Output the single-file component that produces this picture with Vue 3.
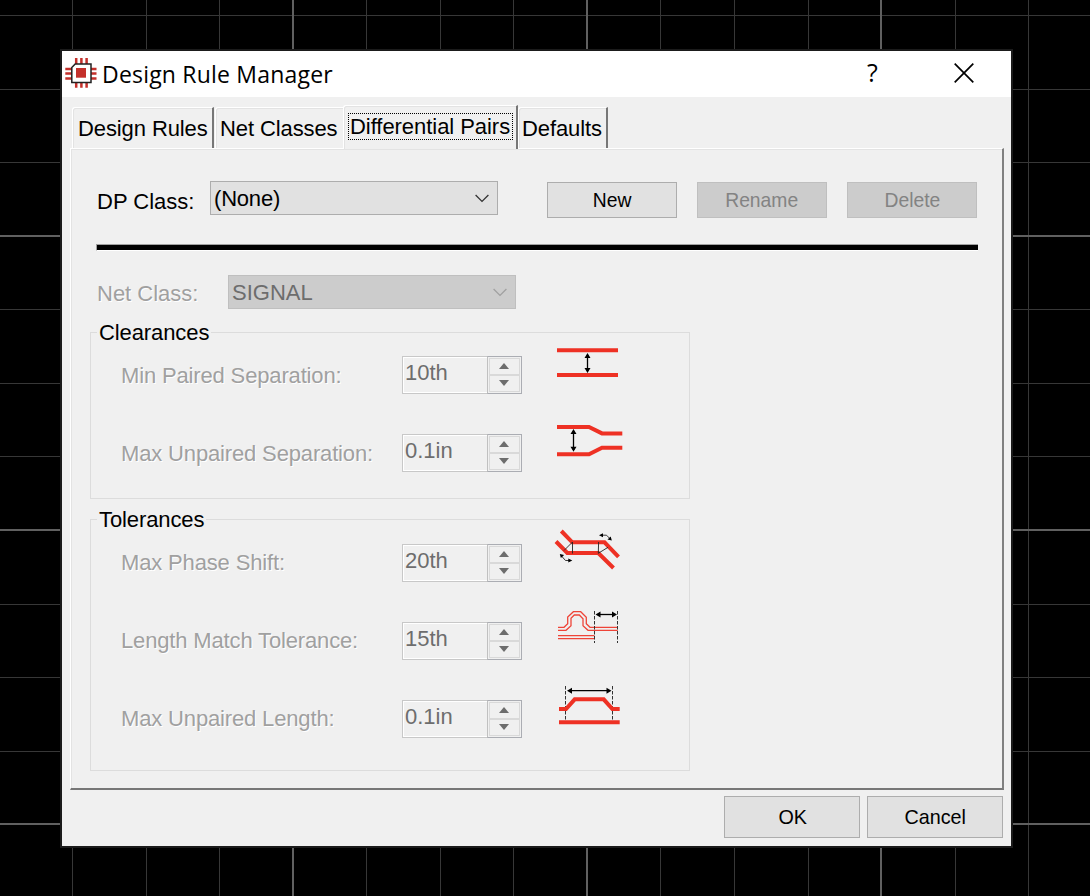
<script setup>
const thin = { x: [72, 146, 219, 366, 440, 513, 660, 734, 808, 955, 1028], y: [15, 89, 162, 309, 383, 456, 604, 677, 751] }
const bold = { x: [292, 586, 880], y: [235, 529, 823] }
const clearances = [
  { label: 'Min Paired Separation:', value: '10th', icon: 'paired' },
  { label: 'Max Unpaired Separation:', value: '0.1in', icon: 'unpaired' },
]
const tolerances = [
  { label: 'Max Phase Shift:', value: '20th', icon: 'phase' },
  { label: 'Length Match Tolerance:', value: '15th', icon: 'match' },
  { label: 'Max Unpaired Length:', value: '0.1in', icon: 'length' },
]
const groups = [
  { title: 'Clearances', rows: clearances, cls: 'clear' },
  { title: 'Tolerances', rows: tolerances, cls: 'toler' },
]
</script>

<template>
  <div class="desktop">
    <svg class="canvas" width="1090" height="896" shape-rendering="crispEdges">
      <rect v-for="x in thin.x" :key="'a' + x" :x="x" y="0" width="1" height="896" fill="#373737" />
      <rect v-for="y in thin.y" :key="'b' + y" x="0" :y="y" width="1090" height="1" fill="#373737" />
      <rect v-for="x in bold.x" :key="'c' + x" :x="x" y="0" width="2" height="896" fill="#606060" />
      <rect v-for="y in bold.y" :key="'d' + y" x="0" :y="y" width="1090" height="2" fill="#606060" />
    </svg>
    <main class="dialog">
      <header class="titlebar">
        <svg class="chip" width="32" height="32" viewBox="65 57 32 32">
          <g stroke="#c4302b" stroke-width="2.500">
            <path d="M76.200 58v29.700M81.400 58v29.700M86.600 58v29.700M65.300 69h31.200M65.300 73.600h31.200M65.300 78.500h31.200" />
          </g>
          <path d="M75.200 64H91v18.600H71.800V67.500z" fill="#fff" stroke="#222" stroke-width="1.500" />
          <rect x="76" y="68" width="10" height="9.700" fill="#c4302b" />
        </svg>
        <h1>Design Rule Manager</h1>
        <span class="help">?</span>
        <svg class="close" width="20" height="20" viewBox="0 0 20 20"><path d="M.7.700l18.600 18.600M19.300.700L.7 19.300" stroke="#000" stroke-width="1.700" /></svg>
      </header>
      <nav class="tabs">
        <div class="tab t1"><span>Design Rules</span></div>
        <div class="tab t2"><span>Net Classes</span></div>
        <div class="tab t3 active"><span>Differential Pairs</span></div>
        <div class="tab t4"><span>Defaults</span></div>
      </nav>
      <section class="panel">
        <div class="row-class">
          <label class="dp">DP Class:</label>
          <div class="combo"><span>(None)</span>
            <svg width="14" height="9" viewBox="0 0 14 9"><path d="M.6 1l6.400 6.400L13.400 1" fill="none" stroke="#333" stroke-width="1.300" /></svg>
          </div>
          <div class="btns">
            <button class="btn"><span>New</span></button>
            <button class="btn off"><span>Rename</span></button>
            <button class="btn off"><span>Delete</span></button>
          </div>
        </div>
        <div class="rule"></div>
        <div class="row-net">
          <label>Net Class:</label>
          <div class="combo off"><span>SIGNAL</span>
            <svg width="14" height="9" viewBox="0 0 14 9"><path d="M.6 1l6.400 6.400L13.400 1" fill="none" stroke="#a0a0a0" stroke-width="1.300" /></svg>
          </div>
        </div>
        <div v-for="g in groups" :key="g.title" class="group" :class="g.cls">
          <h2>{{ g.title }}</h2>
          <div v-for="r in g.rows" :key="r.label" class="field">
            <label>{{ r.label }}</label>
            <div class="spin">
              <span class="val">{{ r.value }}</span>
              <div class="arrows">
                <i><svg width="10" height="6"><path d="M0 6L5 0l5 6z" fill="#6d6d6d" /></svg></i>
                <i><svg width="10" height="6"><path d="M0 0h10L5 6z" fill="#6d6d6d" /></svg></i>
              </div>
            </div>
            <svg v-if="r.icon === 'paired'" class="pic" width="80" height="50" viewBox="550 340 80 50">
              <path class="red" d="M557 350.300h61M557 375h61" />
              <path class="ink" d="M587.500 355v16" />
              <path d="M587.500 353l3 5h-6zM587.500 373l3-5h-6z" />
            </svg>
            <svg v-else-if="r.icon === 'unpaired'" class="pic" width="80" height="50" viewBox="550 418 80 50">
              <path class="red" d="M557 427h32l13 6.400h20.300M557 454.300h32l13-6.500h20.300" />
              <path class="ink" d="M573.500 431v19" />
              <path d="M573.500 429l3 5h-6zM573.500 451.700l3-5h-6z" />
            </svg>
            <svg v-else-if="r.icon === 'phase'" class="pic" width="80" height="50" viewBox="550 528 80 50">
              <path class="red" d="M561.300 531l11 11.300H604.500L618.500 556.800M556 541.500L567.300 553h31L613.500 568" />
              <path class="hair" d="M572.500 542v11.500M572.500 542l-8.500 8.500M598.600 542l-.3 11.300 9.700-6M601 535.200h5.500l4 4M561.500 556l4 4.500h5.500" />
              <path d="M599 535.200l4-2v4zM611.800 540.500l-4.300-1 3.200-3zM559.800 554l4.300 1-3.200 3zM572.300 560.500l-4-2v4z" />
            </svg>
            <svg v-else-if="r.icon === 'match'" class="pic" width="80" height="50" viewBox="550 606 80 50">
              <path class="fine" d="M558 627.300h6l3.700-3.600V617l5.700-5.300h7.300l5.600 5.600v6.400l3.700 3.600h27.700M558 630.300h8l5-4.600v-7.400l3.300-3.300h5l3.700 3.700v7l5 4.600h29.700M558 635.700h36.500M558 638.700h36.500" />
              <path class="dash" d="M594.500 611v32M617.500 611v32" />
              <path class="ink" d="M598 614.500h16" />
              <path d="M595.500 614.500l5-3v6zM617 614.500l-5-3v6z" />
            </svg>
            <svg v-else class="pic" width="80" height="50" viewBox="550 684 80 50">
              <path class="dash" d="M565.500 686v36M612.500 686v36" />
              <path class="red" d="M559 709h7l8.700-9.700h29l8.700 9.700h7.300M559 722.300h60.700" />
              <path class="ink" d="M570 690.700h38" />
              <path d="M567 690.700l5-3v6zM611.500 690.700l-5-3v6z" />
            </svg>
          </div>
        </div>
      </section>
      <footer>
        <button class="btn"><span>OK</span></button>
        <button class="btn"><span>Cancel</span></button>
      </footer>
    </main>
  </div>
</template>

<style scoped>
* { box-sizing: border-box; }
.desktop { width: 1090px; height: 896px; background: #000; overflow: hidden; position: relative; padding: 49px 0 0 60px; font: 22px/26px "Liberation Sans", Arial, sans-serif; color: #000; white-space: nowrap; }
.canvas { position: absolute; inset: 0; }
.dialog { position: relative; width: 953px; height: 799px; border: 2px solid #1b1b1b; background: #f0f0f0; display: flex; flex-direction: column; }
.titlebar { height: 46px; flex: none; background: #fff; display: flex; padding-left: 3px; }
.chip { margin-top: 6px; }
h1 { margin: 7px 0 0 5px; width: 662px; font: 23px/32px "Open Sans", "Noto Sans", sans-serif; letter-spacing: .2px; }
.help { width: 20px; margin: 5px 0 0 103px; font: 500 25px/32px "Open Sans", "Noto Sans", sans-serif; }
.close { margin: 12px 0 0 67px; }
.tabs { height: 51px; flex: none; display: flex; align-items: flex-end; padding-left: 10px; letter-spacing: -.1px; }
.tab { height: 41px; padding: 8px 0 0 5px; border-top: 1px solid #fff; border-left: 1px solid #fff; border-radius: 3px 0 0 0; box-shadow: inset 1px 1px #e3e3e3; }
.t1 { width: 142px; border-right: 2px solid #777; }
.t2 { width: 128px; margin-left: 1px; padding-left: 4px; }
.t3 { width: 175px; }
.t4 { width: 90px; border-right: 2px solid #777; padding-left: 3px; letter-spacing: -.1px; }
.active { height: 44px; margin-bottom: -1px; padding: 7px 0 0 4px; background: #f0f0f0; border-right: 2px solid #777; position: relative; z-index: 1; }
.active span { display: block; width: 165px; height: 27px; border: 1px dotted #000; padding-left: 1px; line-height: 26px; letter-spacing: -.05px; }
.panel { margin-left: 8px; width: 934px; height: 642px; flex: none; border: 1px solid #fff; border-right: 2px solid #808080; border-bottom: 2px solid #777; box-shadow: inset 1px 1px #e3e3e3; padding: 32px 0 0 19px; }
.row-class { display: flex; height: 63px; padding-left: 7px; }
.dp { width: 113px; padding-top: 8px; }
.combo { flex: none; width: 288px; height: 34px; border: 1px solid #adadad; background: #e1e1e1; display: flex; justify-content: space-between; padding: 4px 8px 0 3px; letter-spacing: -.2px; }
.combo svg { margin-top: 8px; }
.combo.off { background: #ccc; border-color: #bfbfbf; color: #6d6d6d; letter-spacing: 0; }
.btns { display: flex; gap: 20px; margin: 1px 0 0 49px; }
.btn { font: 21px/26px "Liberation Sans", Arial, sans-serif; color: #000; background: #e1e1e1; border: 1px solid #adadad; padding: 0; width: 130px; height: 36px; border-radius: 0; }
.btn span { display: inline-block; transform: scaleX(.92); }
.btn.off { color: #838383; background: #ccc; border-color: #bfbfbf; }
.rule { margin: 0 0 0 6px; width: 882px; height: 7px; background: #000; border-top: 1px solid #a0a0a0; border-left: 1px solid #a0a0a0; border-bottom: 1px solid #fff; }
.row-net { display: flex; height: 81px; padding: 24px 0 0 7px; }
.row-net label { width: 131px; padding-top: 6px; color: #a0a0a0; text-shadow: 1px 1px #fff; }
.group { width: 600px; border: 1px solid #dcdcdc; padding-left: 30px; }
.clear { height: 167px; }
.toler { height: 252px; margin-top: 20px; }
h2 { font: inherit; letter-spacing: -.1px; width: fit-content; height: 26px; background: #f0f0f0; margin: -13px 0 0 -24px; padding: 0 2px; }
.field { height: 78px; display: flex; }
.clear .field:nth-of-type(1) { margin-top: 10px; }
.toler .field:nth-of-type(1) { margin-top: 11px; }
.field label { width: 281px; padding-top: 7px; color: #a0a0a0; text-shadow: 1px 1px #fff; letter-spacing: -.15px; }
.toler .field label { padding-top: 6px; }
.spin { width: 120px; height: 38px; border: 1px solid #c8c8c8; box-shadow: inset 0 0 0 1px #fff; display: flex; color: #6d6d6d; }
.val { width: 84px; padding: 3px 0 0 2px; }
.arrows { width: 35px; height: 38px; margin: -1px -1px 0 0; border: 1px solid #abadb3; border-left-color: #c0c0c0; padding: 1px; display: grid; grid-template-rows: 17px 17px; background: #f0f0f0; }
.arrows i { border: 1px solid #d9d9d9; display: flex; padding: 4px 0 0 9px; }
.pic { margin: -16px 0 0 28px; }
.red { fill: none; stroke: #ee3124; stroke-width: 4; }
.fine { fill: none; stroke: #ee4438; stroke-width: 1.3; }
.ink { stroke: #000; stroke-width: 1.3; fill: none; }
.hair { stroke: #222; stroke-width: .9; fill: none; }
.dash { stroke: #333; stroke-width: 1; stroke-dasharray: 3.5 1.5; fill: none; }
footer { display: flex; gap: 7px; padding: 6px 0 0 662px; }
footer .btn { width: 136px; height: 42px; }
footer .btn span { transform: translateX(.5px) scaleX(.94); }
</style>
<style>
body { margin: 0; background: #000; }
</style>
